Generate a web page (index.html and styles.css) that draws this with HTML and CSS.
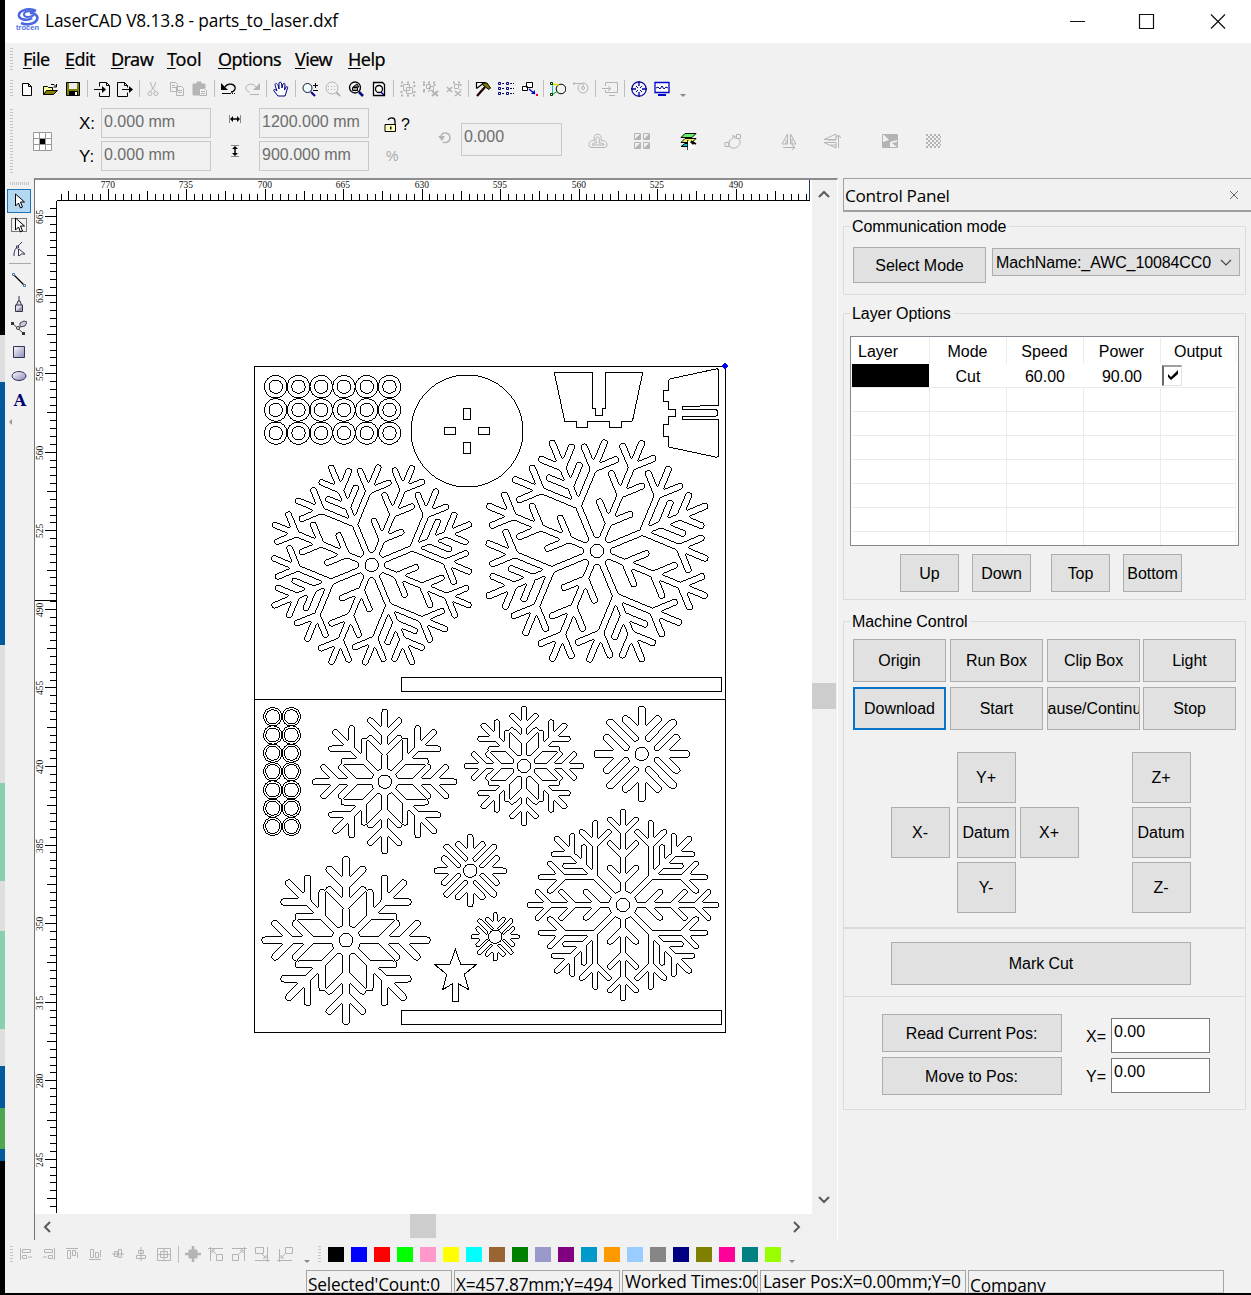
FILE: index.html
```html
<!DOCTYPE html>
<html lang="en">
<head>
<meta charset="utf-8">
<title>LaserCAD V8.13.8 - parts_to_laser.dxf</title>
<link rel="stylesheet" href="styles.css">
</head>
<body>
<div class="desktop"><i class="d1"></i><i class="d2"></i><i class="d3"></i><i class="d2 h138"></i><i class="d4"></i><i class="d2 h50"></i><i class="d4"></i><i class="d2 h37"></i><i class="d3 h42"></i><i class="d5"></i><i class="d3 h12"></i></div>
<div class="window">
  <header class="titlebar">
    <svg class="logo" width="24" height="24" viewBox="0 0 24 24"><g fill="none" stroke="#4a66e0"><path d="M20 3C12-1 2 3 3 8c1 4 9 5 13 2" stroke-width="2.6"/><path d="M18 4C12 2 7 4 8 7s8 2 10 0" stroke-width="2"/><path d="M14 5c7 0 9 5 6 8-3 4-11 4-15 2" stroke-width="2.6"/></g><text x="0" y="22" textLength="23" lengthAdjust="spacingAndGlyphs" class="logotext">trocen</text></svg>
    <span class="title">LaserCAD V8.13.8 - parts_to_laser.dxf</span>
    <svg class="winbtns" width="160" height="20" viewBox="0 0 160 20" fill="none" stroke="#111" stroke-width="1.2"><path d="M0 10.5h15M69.500 3.500h14v14h-14zM141 3.500l14 14M155 3.500l-14 14"/></svg>
  </header>
  <nav class="menubar"><i class="grip"></i><span class="w44"><u>F</u>ile</span><span class="w46"><u>E</u>dit</span><span class="w56"><u>D</u>raw</span><span class="w51"><u>T</u>ool</span><span class="w77"><u>O</u>ptions</span><span class="w53"><u>V</u>iew</span><span><u>H</u>elp</span></nav>
  <div class="toolbar"><i class="grip"></i>
    <svg viewBox="0 0 16 16"><path d="M3.500 2.500h6l3 3v9h-9zM9.500 2.500v3h3" fill="#fff" stroke="#000"/></svg>
    <svg viewBox="0 0 16 16"><path d="M1.500 13.500v-8h4l1 1h4v3" fill="#ff9" stroke="#000"/><path d="M1.500 13.500l3-4h11l-4 4z" fill="#808000" stroke="#000"/><path d="M9 3.500h3l2 2M14.500 3v3h-3" fill="none" stroke="#000"/></svg>
    <svg viewBox="0 0 16 16"><path d="M1.500 1.500h13v13h-13z" fill="#808000" stroke="#000"/><path d="M4 2h8v6H4z" fill="#eee"/><path d="M4 10h9v5H4z" fill="#000"/><path d="M10 11h2v3h-2z" fill="#fff"/></svg>
    <i class="sep"></i>
    <svg viewBox="0 0 16 16"><path d="M5.500 5.500v-4h7l3 3v11h-10v-4M12.500 1.500v3h3" fill="none" stroke="#000"/><path d="M0 8.500h10" stroke="#000"/><path d="M8 5l4 3.500L8 12z"/></svg>
    <svg viewBox="0 0 16 16"><path d="M10.500 6.500v-2l-3-3h-7v14h10v-4M7.500 1.500v3h3" fill="none" stroke="#000"/><path d="M5 8.500h9" stroke="#000"/><path d="M12 5l4 3.500-4 3.500z"/></svg>
    <i class="sep"></i>
    <svg class="off" viewBox="0 0 16 16"><path d="M4.500 1c0 4 3 7 4.500 9M9.500 1c0 4-3 7-5 9"/><circle cx="4" cy="12.500" r="2"/><circle cx="10" cy="12.500" r="2"/></svg>
    <svg class="off" viewBox="0 0 16 16"><path d="M1.500 1.500h5l2 2v7h-7zM3 4.500h3M3 6.500h4M7.500 5.500h5l2 2v7h-7zM9 9.500h4M9 11.500h4"/></svg>
    <svg class="off" viewBox="0 0 16 16"><path d="M1 3h12v4H7v7H1zM5 1h4v2H5z" fill="#b4b4b4"/><path d="M7.500 7.500h5l2 2v5h-7zM9 10.500h4M9 12.500h4"/></svg>
    <i class="sep"></i>
    <svg viewBox="0 0 16 16"><path d="M4 6c3-5 11-3 10 2-1 3-3 3-4 3" fill="none" stroke="#000" stroke-width="1.300"/><path d="M0 2v7h7z"/><path d="M1 12.500h9M11 12.500h1M13 12.500h1" stroke="#000"/></svg>
    <svg class="off" viewBox="0 0 16 16"><path d="M12 6c-3-5-11-3-10 2 1 3 3 3 4 3M6 13.500h9"/><path d="M16 2v7H9z" fill="#b4b4b4" stroke="none"/></svg>
    <i class="sep"></i>
    <svg viewBox="0 0 16 16"><path d="M5 15L1 10c-1-2 1-2 3 0L2 4c0-2 2-2 3 0l1 4V2c0-1 2-1 2.500 0l.5 5 1-4c1-1 2-1 2 1l-.5 5 1.500-3c1-1 2 0 1.500 1L12 15z" fill="#fff" stroke="#000080"/></svg>
    <i class="sep"></i>
    <svg viewBox="0 0 16 16"><circle cx="5.500" cy="7" r="4.500" fill="#eff" stroke="#113"/><path d="M9 11l4 4" stroke="#008" stroke-width="2"/><path d="M11 4.500h5M13.500 2v5M11 9.500h5" stroke="#000"/></svg>
    <svg class="off" viewBox="0 0 16 16"><circle cx="7" cy="7" r="6"/><path d="M11 11l4 4" stroke-width="2"/><path d="M3 5.500h8M3 8.500h8" stroke-dasharray="1 2"/></svg>
    <svg viewBox="0 0 16 16"><circle cx="7" cy="6.500" r="5.500" fill="#eee" stroke="#000" stroke-width="1.300"/><path d="M4.500 6.500h5v3h-5zM5 6l4-3 2 3z" fill="#999" stroke="#000"/><path d="M11 11l4 4" stroke="#008" stroke-width="2.500"/></svg>
    <svg viewBox="0 0 16 16"><path d="M2.500 1.500h9l2 2v11h-11z" fill="#fff" stroke="#000" stroke-width="1.300"/><circle cx="8" cy="8" r="3.500" fill="none" stroke="#000" stroke-width="1.300"/><path d="M10 11l3 3" stroke="#008" stroke-width="1.500"/></svg>
    <i class="sep"></i>
    <svg class="off" viewBox="0 0 16 16"><path d="M3.500 3.500h6v6h-6zM6.500 6.500h6v6h-6z"/><path d="M1 1.500h15M1 14.500h15M1.500 4v10M14.500 4v10" stroke-width="2" stroke-dasharray="2 4"/></svg>
    <svg class="off" viewBox="0 0 16 16"><path d="M3.500 3.500h4v4h-4zM6.500 5.500h4v4h-4z"/><path d="M0 1.500h12M0 10.500h6M1 3v8M11.500 3v4" stroke-width="2" stroke-dasharray="2 3"/><path d="M9 10l6 5M15 10l-6 5" stroke-width="2"/></svg>
    <svg class="off" viewBox="0 0 16 16"><path d="M8.500 3.500h4v4h-4z"/><path d="M7 1.500h8M14.500 3v6" stroke-width="2" stroke-dasharray="2 3"/><path d="M1 6l5 5M6 6l-5 5M9 10l6 5M15 10l-6 5" stroke-width="1.600"/></svg>
    <i class="sep"></i>
    <svg viewBox="0 0 16 16"><path d="M1.500 7.500v-6h8l-8 6" fill="#fff" stroke="#000" stroke-width="1.200"/><path d="M7 2h5l3.500 5-1.500 1.500L9 5z" fill="#770" stroke="#000"/><path d="M10 6l-8 9" stroke="#200" stroke-width="2.300"/></svg>
    <svg viewBox="0 0 16 16" fill="none" stroke="#113"><path d="M.500 1.500h2v2h-2zM.500 6.500h2v2h-2zM.500 11.500h2v2h-2zM8.500 1.500h2v2h-2zM8.500 6.500h2v2h-2zM8.500 11.500h2v2h-2z" stroke="#008"/><path d="M4 2.500h3M4 7.500h3M4 12.500h3M12 2.500h4M12 7.500h4M12 12.500h4" stroke-dasharray="2 1"/></svg>
    <svg viewBox="0 0 16 16"><path d="M4.500 1.500h6v5h-6zM.500 5.500h5v4h-5z" fill="#fff" stroke="#000"/><path d="M7 8l6 5" stroke="#00c" stroke-width="1.300"/><path d="M13 9v4H9z" fill="#00c"/><path d="M14 13h2v2h-2z" fill="#e02"/></svg>
    <i class="sep"></i>
    <svg viewBox="0 0 16 16" fill="none"><circle cx="11" cy="8" r="4.800" stroke="#000"/><path d="M2 3l7 1" stroke="#dd0" stroke-width="1.500"/><path d="M2.500 3v10" stroke="#0cc"/><path d="M3 13l5-3" stroke="#0a0"/><path d="M.500 1.500h2v2h-2zM.500 12.500h2v2h-2z" stroke="#030"/></svg>
    <svg class="off" viewBox="0 0 16 16"><circle cx="10" cy="7" r="5"/><circle cx="10" cy="7" r="1.500"/><path d="M0 2.500h9M10 2v4M1 1v3"/></svg>
    <i class="sep"></i>
    <svg class="off" viewBox="0 0 16 16"><path d="M3.500 5v-3.500h12v10h-12V9M7 14.500h6M0 7.500h8M6 5l3 2.500L6 10"/></svg>
    <i class="sep"></i>
    <svg viewBox="0 0 16 16" fill="none" stroke="#009"><circle cx="8" cy="8" r="7.200" stroke-width="1.200"/><path d="M8 0v5M8 11v5M0 8h5M11 8h5" stroke-width="1.300"/><path d="M5 5l2 2M11 5L9 7M5 11l2-2M11 11L9 9"/></svg>
    <svg viewBox="0 0 16 16"><path d="M1 1.500h14v10H1z" fill="#fff" stroke="#00c" stroke-width="1.300"/><path d="M2 7l2-1 2 2 2-3 2 3 2-2 2 1" fill="none" stroke="#008"/><path d="M4 13h8v2H4z" fill="#00c"/></svg>
    <i class="more"></i>
  </div>
  <div class="propbar">
    <i class="grip"></i>
    <svg class="anchor" width="19" height="19" viewBox="0 0 19 19"><path d="M.500.500h18v18H.500zM6.500.500v18M12.500.500v18M.500 6.500h18M.500 12.500h18" fill="#fff" stroke="#999"/><path d="M7 7h5v5H7z"/></svg>
    <div class="lbls"><span>X:</span><span>Y:</span></div>
    <div class="fields"><span class="field">0.000 mm</span><span class="field">0.000 mm</span></div>
    <div class="arrows"><svg width="14" height="12" viewBox="0 0 14 12"><path d="M1.500 2v8M12.500 2v8" stroke="#888"/><path d="M3 6h8" stroke="#000" stroke-width="1.500"/><path d="M2 6l3-3v6zM12 6L9 3v6z"/></svg><svg width="12" height="14" viewBox="0 0 12 14"><path d="M2 1.500h8M2 12.500h8" stroke="#888"/><path d="M6 3v8" stroke="#000" stroke-width="1.500"/><path d="M6 2l3 3H3zM6 12l3-3H3z"/></svg></div>
    <div class="fields"><span class="field">1200.000 mm</span><span class="field">900.000 mm</span></div>
    <div class="locks"><span class="lockrow"><svg width="13" height="16" viewBox="0 0 13 16"><path d="M4 3c1-3 7-3 7 1v4" fill="none" stroke="#000" stroke-width="1.300"/><path d="M1 7.500h10.500v7H1z" fill="#ffb" stroke="#000"/><path d="M6 9.500h1.500v3H6z"/></svg>?</span><span class="pct">%</span></div>
    <svg class="off rot" width="14" height="16" viewBox="0 0 14 16"><path d="M3 7c0-6 9-5 9 1 0 5-6 5-7 4" stroke-width="1.500"/><path d="M0 6h7l-3 5z" fill="#b4b4b4" stroke="none"/></svg>
    <span class="field angle">0.000</span>
    <svg class="off p1" width="20" height="16" viewBox="0 0 20 16"><path d="M1 11.500c0-3.500 3-4 5.500-4C4-1 15-1 13 7.500c3 0 6 .5 6 4 0 2.500-1.500 3-3 3H4c-1.500 0-3-.5-3-3z"/><path d="M4 12c0-2 2-2 4.500-2C6 1.500 13 1.500 11 10c3 0 5 0 5 2z"/></svg>
    <svg class="off p2" width="18" height="18" viewBox="0 0 18 18"><path d="M1.500 1.500h6v6h-6zM10.500 1.500h6v6h-6zM1.500 10.500h6v6h-6zM10.500 10.500h6v6h-6z"/><path d="M7 2v5H2zM16 2v5h-5zM7 11v5H2zM16 11v5h-5z" fill="#b4b4b4" stroke="none"/></svg>
    <svg class="p3" width="18" height="18" viewBox="0 0 18 18"><path d="M6 1.500h11l-4 4H2z" fill="#6e6" stroke="#000"/><path d="M6 6.500h11l-4 4H2z" fill="#ee6" stroke="#000"/><path d="M6 11.500h9l-4 3H2z" fill="#0cc" stroke="#000"/><path d="M9 8v10M12 9l5 3" stroke="#000" stroke-width="1.500"/><path d="M9 8l8 8h-5l-3 3z" fill="#fff"/></svg>
    <svg class="off p4" width="18" height="18" viewBox="0 0 18 18"><path d="M6 8c-4 7 3 10 7 7 5-3 3-8 1-8M2 10.500h3v4H1v-4zM12.500 2.500h4v4h-4zM5 9l6-5M8 4h3v3"/></svg>
    <svg class="off p5" width="16" height="18" viewBox="0 0 16 18"><path d="M6.500 2v10H1zM9.500 2v10H15zM2 15.500h12M11 13l3 2.500L11 18M11 7v5M5 8v4"/></svg>
    <svg class="off p6" width="18" height="18" viewBox="0 0 18 18"><path d="M1 7.500h12V2zM1 10.500h12V16zM15.500 3v13M13 6l2.500-3L18 6M5 8h8M8 13h5"/></svg>
    <svg class="off p7" width="16" height="16" viewBox="0 0 16 16"><path d="M.500 1.500h15v13H.500z"/><path d="M8 2h7v5L8 9v5H1V9l6-2L2 2zM10 10l5 4v-5z" fill="#b4b4b4" stroke="none"/></svg>
    <svg class="off p8" width="16" height="16" viewBox="0 0 16 16"><path d="M1 2h14M3 4h14M1 6h14M3 8h14M1 10h14M3 12h14M1 14h14" stroke-width="2" stroke-dasharray="2 2"/></svg>
  </div>
  <main class="main">
    <aside class="tools">
      <i class="hgrip"></i>
      <span class="tool active"><svg viewBox="0 0 16 16"><path d="M4.500 1v12l3-3 2 5 2-1-2-5h4z" fill="#fff" stroke="#000"/></svg></span>
      <span class="tool"><svg viewBox="0 0 16 16"><path d="M.500 1.500h15v13H.500z" fill="none" stroke="#000" stroke-dasharray="1 1"/><path d="M4.500 1v12l3-3 2 5 2-1-2-5h4z" fill="#fff" stroke="#000"/></svg></span>
      <span class="tool"><svg viewBox="0 0 16 16" fill="none" stroke="#335"><path d="M3 15c0-6 1-7 8-14M7.500 8v7M8 8l6 5H10.500L8 15"/><path d="M5.500 5h2v2h-2z" fill="#fff"/></svg></span>
      <i class="hsep"></i>
      <span class="tool"><svg viewBox="0 0 16 16"><path d="M3 3l10 10" stroke="#000" stroke-width="1.200"/><path d="M1.500 1.500h2v2h-2zM12.500 12.500h2v2h-2z" fill="#fff" stroke="#47a"/></svg></span>
      <span class="tool"><svg viewBox="0 0 16 16"><path d="M4.500 15.500V9h7v6.500zM5.500 9L7 5h2l1.500 4M8 0v5" fill="#dde" stroke="#334"/><path d="M5 15l6-5v5z" fill="#99b"/></svg></span>
      <span class="tool"><svg viewBox="0 0 16 16"><path d="M1 3l12 11" stroke="#444"/><path d="M0 2h3v3H0zM11 12h3v3h-3z" fill="#333"/><path d="M9 3l4-2 3 1-2 4-5 1z" fill="#ccd" stroke="#445"/><circle cx="7" cy="8" r="1.500" fill="#fff" stroke="#333"/></svg></span>
      <span class="tool"><svg viewBox="0 0 16 16"><defs><linearGradient id="g" x2="1" y2="1"><stop stop-color="#fff"/><stop offset="1" stop-color="#8888b8"/></linearGradient></defs><path d="M2.500 2.500h11v11h-11z" fill="url(#g)" stroke="#335"/></svg></span>
      <span class="tool"><svg viewBox="0 0 16 16"><ellipse cx="8" cy="8" rx="7" ry="4.500" fill="url(#g)" stroke="#335"/></svg></span>
      <span class="tool letter">A</span>
      <i class="lefttri"></i>
    </aside>
    <section class="view">
      <svg id="canvas" width="777" height="1034" viewBox="35 180 777 1034"></svg>
      <div class="vscroll"><svg width="12" height="8" viewBox="0 0 12 8"><path d="M1 7l5-5 5 5" /></svg><b></b><svg width="12" height="8" viewBox="0 0 12 8"><path d="M1 1l5 5 5-5"/></svg></div>
      <div class="hscroll"><svg width="8" height="12" viewBox="0 0 8 12"><path d="M7 1L2 6l5 5"/></svg><b></b><svg width="8" height="12" viewBox="0 0 8 12"><path d="M1 1l5 5-5 5"/></svg></div>
    </section>
    <section class="panel">
      <div class="phead"><span>Control Panel</span><svg width="8" height="8" viewBox="0 0 8 8"><path d="M0 0l8 8M8 0L0 8" stroke="#666"/></svg></div>
      <fieldset class="comm"><legend>Communication mode</legend>
        <div class="row"><span class="btn sel">Select Mode</span><span class="combo">MachName:_AWC_10084CC0<svg width="12" height="8" viewBox="0 0 12 8"><path d="M1 1l5 5 5-5" fill="none" stroke="#444" stroke-width="1.200"/></svg></span></div>
      </fieldset>
      <fieldset class="layers"><legend>Layer Options</legend>
        <div class="table">
          <div class="tr th"><span>Layer</span><span>Mode</span><span>Speed</span><span>Power</span><span>Output</span></div>
          <div class="tr r1"><span class="black"></span><span>Cut</span><span>60.00</span><span>90.00</span><span><i class="check"><svg width="12" height="12" viewBox="0 0 12 12"><path d="M1 5l3 3 7-7v4l-7 6-3-3z"/></svg></i></span></div>
          <div class="tr"><span></span><span></span><span></span><span></span><span></span></div>
          <div class="tr"><span></span><span></span><span></span><span></span><span></span></div>
          <div class="tr"><span></span><span></span><span></span><span></span><span></span></div>
          <div class="tr"><span></span><span></span><span></span><span></span><span></span></div>
          <div class="tr"><span></span><span></span><span></span><span></span><span></span></div>
          <div class="tr"><span></span><span></span><span></span><span></span><span></span></div>
          <div class="tr last"><span></span><span></span><span></span><span></span><span></span></div>
        </div>
        <div class="order"><span class="btn">Up</span><span class="btn">Down</span><span class="btn">Top</span><span class="btn">Bottom</span></div>
      </fieldset>
      <fieldset class="machine"><legend>Machine Control</legend>
        <div class="cmds"><span class="btn">Origin</span><span class="btn">Run Box</span><span class="btn">Clip Box</span><span class="btn light">Light</span><span class="btn focus">Download</span><span class="btn">Start</span><span class="btn"><em>Pause/Continue</em></span><span class="btn light">Stop</span></div>
        <div class="jog"><span class="btn yp">Y+</span><span class="btn zp">Z+</span><span class="btn xm">X-</span><span class="btn dd">Datum</span><span class="btn xp">X+</span><span class="btn zd">Datum</span><span class="btn ym">Y-</span><span class="btn zm">Z-</span></div>
      </fieldset>
      <div class="mark"><span class="btn">Mark Cut</span></div>
      <div class="pos">
        <div class="pbtns"><span class="btn">Read Current Pos:</span><span class="btn">Move to Pos:</span></div>
        <div class="pin"><label>X=</label><span>0.00</span><label>Y=</label><span>0.00</span></div>
      </div>
    </section>
  </main>
  <div class="bottombar"><i class="grip"></i>
    <svg class="off" viewBox="0 0 16 16"><path d="M2.500 2v12M4.500 3.500h8v3h-8zM4.500 9.500h4v3h-4zM10 11h4"/></svg>
    <svg class="off" viewBox="0 0 16 16"><path d="M13.500 2v12M3.500 3.500h8v3h-8zM7.500 9.500h4v3h-4zM2 11h4"/></svg>
    <svg class="off" viewBox="0 0 16 16"><path d="M2 2.500h12M3.500 4.500h3v8h-3zM8.500 4.500h3v5h-3zM13.500 6v6"/></svg>
    <svg class="off" viewBox="0 0 16 16"><path d="M2 13.500h12M3.500 3.500h3v8h-3zM8.500 6.500h3v5h-3zM13.500 4v7"/></svg>
    <svg class="off" viewBox="0 0 16 16"><path d="M2 8h12M4.500 5.500h3v5h-3zM8.500 3.500h3v8h-3z"/></svg>
    <svg class="off" viewBox="0 0 16 16"><path d="M8 1v14M5.500 4.500h5v3h-5zM3.500 9.500h9v3h-9z"/></svg>
    <svg class="off" viewBox="0 0 16 16"><path d="M1.500 2.500h13v12h-13zM4.500 5.500h7v6h-7zM8 2v12M2 8.500h12"/></svg>
    <i class="sep"></i>
    <svg class="off" viewBox="0 0 16 16"><path d="M4 4h8v8H4z" fill="#b4b4b4"/><path d="M8 0v16M0 8h16" stroke-width="2.500"/></svg>
    <svg class="off" viewBox="0 0 16 16"><path d="M0 2.500h15M2.500 1v14M8.500 8.500h6v6h-6zM4 4l4 4M4 7V4h3"/></svg>
    <svg class="off" viewBox="0 0 16 16"><path d="M1 2.500h15M13.500 1v14M1.500 8.500h6v6h-6zM12 4L8 8M9 4h3v3"/></svg>
    <svg class="off" viewBox="0 0 16 16"><path d="M1 14.500h15M13.500 1v15M1.500 1.500h8v6h-8zM8 8l4 4M12 9v3H9"/></svg>
    <svg class="off" viewBox="0 0 16 16"><path d="M0 14.500h15M2.500 3v13M8.500 1.500h7v6h-7zM8 8l-4 4M4 9v3h3"/></svg>
    <i class="more"></i><i class="grip g2"></i><div class="swatches" id="swatches"></div><i class="more m2"></i>
  </div>
  <footer class="status"><span class="s1">Selected'Count:0</span><span class="s2">X=457.87mm;Y=494</span><span class="s3">Worked Times:00</span><span class="s4">Laser Pos:X=0.00mm;Y=0</span><span class="s5">Company</span></footer>
</div>
<script src="app.js"></script>
</body>
</html>
```
FILE: styles.css
```css
* { box-sizing: border-box; }
body { margin: 0; width: 1251px; height: 1295px; overflow: hidden; display: flex; background: #000; font: 16px "Liberation Sans", Arial, sans-serif; color: #000; }
i { font-style: normal; display: block; flex: none; }
svg { flex: none; display: block; }
.desktop { width: 5px; flex: none; }
.d1 { height: 335px; background: #000; }
.d2 { height: 47px; background: #dedede; }
.d3 { height: 263px; background: #005a9c; }
.d4 { height: 98px; background: #88d0ae; }
.d5 { height: 41px; background: #4fa653; }
.h138 { height: 138px; } .h50 { height: 50px; } .h37 { height: 37px; } .h42 { height: 42px; } .h12 { height: 12px; }
.window { width: 1246px; height: 1293px; background: #f1f1f1; display: flex; flex-direction: column; }
.titlebar { height: 43px; background: #fff; display: flex; align-items: center; padding: 0 0 2px 11px; flex: none; }
.logo { margin-top: -1px; }
.logotext { font: bold 8px "Liberation Sans", sans-serif; fill: #5070e0; }
.title { margin-left: 5px; font: 17.3px "Open Sans", sans-serif; letter-spacing: -.14px; width: 1020px; white-space: nowrap; }
.winbtns { margin-left: 5px; }
.menubar { height: 31px; flex: none; display: flex; align-items: center; font: 18px "Noto Sans", sans-serif; letter-spacing: -.55px; -webkit-text-stroke: .2px #000; }
.menubar u { text-underline-offset: 2px; text-decoration-thickness: 1px; }
.grip { width: 3px; height: 22px; margin: 0 10px 0 5px; background: repeating-linear-gradient(#c4c4c4 0 1px, transparent 1px 3px); }
.w44 { width: 42px; } .w46 { width: 46px; } .w56 { width: 56px; } .w51 { width: 51px; letter-spacing: -.2px; } .w77 { width: 77px; } .w53 { width: 53px; }
.toolbar { height: 29px; flex: none; display: flex; align-items: center; }
.toolbar .grip { height: 18px; margin: 0 2px 0 5px; }
.toolbar svg { width: 16px; height: 16px; margin: 0 3.6px; }
.off { fill: none; stroke: #b4b4b4; }
.sep { width: 1px; height: 17px; background: #bdbdbd; margin: 0 2.3px; }
.more { border: 3px solid transparent; border-top-color: #888; border-bottom: 0; margin: 14px 0 0 6px; }
.propbar { height: 75px; flex: none; display: flex; align-items: center; }
.propbar .grip { height: 64px; }
.anchor { margin: 2px 0 0 10px; }
.lbls { width: 49px; display: flex; flex-direction: column; gap: 12px; padding-left: 27px; font-size: 17px; line-height: 21px; margin-top: -2px; }
.fields { width: 110px; display: flex; flex-direction: column; gap: 3px; margin-top: -3px; }
.field { height: 30px; border: 1.500px solid #c9c9c9; padding: 3px 2px; line-height: 20px; color: #6d6d6d; white-space: nowrap; background: #f0f0f0; font-size: 16px; }
.arrows { width: 48px; display: flex; flex-direction: column; align-items: center; gap: 19px; margin-top: -11px; }
.locks { width: 53px; padding-left: 15px; display: flex; flex-direction: column; gap: 13px; margin-top: -1px; }
.lockrow { display: flex; gap: 4px; align-items: center; line-height: 18px; }
.pct { font-size: 14px; color: #aaa; line-height: 18px; padding-left: 2px; }
.rot { margin: -6px 9px 0 16px; }
.angle { width: 101px; height: 33px; margin-top: -3px; }
.p1 { margin-left: 26px; } .p2 { margin-left: 25px; } .p3 { margin-left: 28px; } .p4 { margin-left: 27px; } .p5 { margin-left: 39px; } .p6 { margin-left: 26px; } .p7 { margin-left: 41px; } .p8 { margin-left: 27px; }
.main { height: 1062px; flex: none; display: flex; }
.tools { width: 29px; flex: none; padding: 3px 0 0 2px; display: flex; flex-direction: column; }
.hgrip { width: 19px; height: 3px; margin: 1px 0 4px 3px; background: repeating-linear-gradient(90deg, #c4c4c4 0 1px, transparent 1px 2px); }
.tool { width: 24px; height: 24px; flex: none; display: flex; align-items: center; justify-content: center; }
.tool svg { width: 16px; height: 16px; }
.active { background: #b4d7f2; border: 1px solid #1c73bd; }
.hsep { height: 1px; margin: 2px 3px 4px 2px; background: #aaa; }
.letter { font: bold 16px "DejaVu Serif", serif; color: #000070; padding-left: 2px; }
.lefttri { width: 0; border: 3px solid transparent; border-right-color: #999; border-left: 0; margin: 7px 0 0 2px; }
.view { width: 804px; flex: none; border-left: 1px solid #747474; border-top: 2px solid #8d8d8d; display: grid; grid-template: 1034px 26px / 777px 25px; border-right: 1px solid #fff; background: #f0f0f0; border-bottom: 0; }
#canvas { background: #fff; }
.vscroll, .hscroll { display: flex; align-items: center; background: #f0f0f0; fill: none; stroke: #5a5a5a; stroke-width: 2; }
.vscroll { flex-direction: column; padding: 10px 1px 0 0; }
.vscroll b { width: 24px; height: 26px; background: #cdcdcd; margin: 485px 0 487px; flex: none; }
.hscroll { padding: 0 0 0 8px; margin: 0; }
.hscroll b { width: 26px; height: 24px; background: #cdcdcd; margin: -2px 357px 0 359px; flex: none; }
.panel { flex: 1; padding-left: 5px; }
.phead { height: 34px; border: 1px solid #a0a0a0; border-right: 0; border-width: 1px 0 2px 1px; display: flex; align-items: center; justify-content: space-between; padding: 1px 13px 0 1px; font: 17.200px "Open Sans", sans-serif; letter-spacing: -.3px; }
fieldset { margin: 0; padding: 0; border: 1px solid #dcdcdc; width: 403px; min-width: 0; }
legend { margin-left: 6px; padding: 0 3px 0 2px; height: 19px; line-height: 19px; letter-spacing: -.07px; }
.comm { height: 78px; margin-top: 5px; }
.row { display: flex; padding: 11px 0 0 9px; gap: 6px; }
.btn { background: #e1e1e1; border: 1px solid #adadad; display: flex; align-items: center; justify-content: center; overflow: hidden; white-space: nowrap; letter-spacing: -.05px; }
.btn em { font-style: normal; flex: none; }
.sel { width: 133px; height: 36px; padding-top: 2px; }
.combo { width: 248px; height: 28px; margin-top: 1px; border: 1px solid #adadad; background: #e1e1e1; display: flex; align-items: center; justify-content: space-between; padding: 1px 7px 0 3px; letter-spacing: -.1px; }
.layers { height: 296px; margin-top: 9px; }
.table { margin: 13px 0 0 6px; width: 389px; height: 210px; background: #fff; border: 1px solid #828790; padding: 1px 2px 1px 1px; overflow: hidden; }
.tr { display: grid; grid-template-columns: 78px 77px 77px 77px 1fr; height: 24px; border-bottom: 1px solid #ebebeb; }
.tr span { border-right: 1px solid #ebebeb; display: flex; align-items: center; justify-content: center; }
.tr span:last-child { border-right-color: #f4f4f4; }
.th { height: 26px; border: 0; }
.th span { padding: 2px 1px 0 0; }
.th span:first-child { justify-content: flex-start; padding-left: 6px; }
.th span:last-child { padding-right: 0; }
.r1 { height: 24px; }
.r1 span { border-color: #fff; padding-top: 2px; }
.r1 span:last-child { justify-content: flex-start; border: 0; padding: 0; }
.r1 .black { background: #000; border-right: 1px solid #fff; }
.check { width: 20px; height: 21px; border: 1px solid #e3e3e3; border-top: 2px solid #a0a0a0; border-left: 2px solid #696969; background: #fff; padding: 2px 0 0 3px; margin-left: 1px; }
.order { display: flex; padding: 8px 0 0 56px; }
.order .btn { width: 59px; height: 38px; margin-right: 13px; padding-top: 1px; }
.order .btn:nth-child(2) { margin-right: 20px; }
.machine { height: 316px; margin-top: 12px; }
.cmds { display: grid; grid-template-columns: 93px 93px 93px 93px; gap: 5px 4px; padding: 8px 0 0 9px; grid-auto-rows: 43px; }
.cmds .light { margin: 0 1px 0 -1px; }
.focus { border: 2px solid #0a74c9; }
.jog { display: grid; padding: 22px 0 0 47px; gap: 4px 0; grid-template-rows: 51px 51px 51px; grid-template-columns: 59px 7px 59px 4px 59px 53px 59px; }
.jog .btn { padding-right: 1px; }
.yp, .dd, .ym { grid-column: 3; } .xm { grid-column: 1; } .xp { grid-column: 5; } .zp, .zd, .zm { grid-column: 7; }
.mark { width: 403px; height: 69px; border: 1px solid #dcdcdc; padding: 13px 0 0 47px; }
.mark .btn { width: 300px; height: 43px; }
.pos { width: 403px; height: 113px; border: 1px solid #dcdcdc; border-top: 0; display: flex; padding: 17px 0 0 38px; }
.pbtns { width: 204px; display: flex; flex-direction: column; gap: 5px; }
.pbtns .btn { width: 180px; height: 38px; padding: 2px 1px 0 0; }
.pin { display: grid; grid-template-columns: 25px 99px; grid-auto-rows: 35px; gap: 5px 0; padding-top: 4px; }
.pin label { line-height: 37px; }
.pin span { background: #fff; border: 1px solid #7a7a7a; padding: 4px 2px; line-height: 18px; }
.bottombar { height: 29px; flex: none; display: flex; align-items: center; }
.bottombar .grip { height: 18px; margin: 0 5px 0 5px; }
.bottombar svg { width: 16px; height: 16px; margin: 0 3.5px; position: relative; top: -.5px; }
.bottombar svg:first-of-type { margin-left: 0; }
.bottombar .more { margin-left: 8px; margin-right: 8px; }
.bottombar .g2 { margin: 0 7px 0 0; }
.swatches { display: flex; gap: 7px; }
.swatches b { width: 16px; height: 15px; }
.status { flex: 1; display: flex; padding: 1px 0 0 301px; gap: 2px; font: 17.300px "Open Sans", sans-serif; letter-spacing: -.18px; }
.status span { border: 1px solid #a5a5a5; border-bottom-color: #ccc; height: 23px; overflow: hidden; white-space: nowrap; line-height: 28px; padding-left: 1px; }
.s1 { width: 146px; } .s2 { width: 166px; } .s3 { width: 136px; } .s4 { width: 206px; } .s5 { width: 256px; }
.status .s3, .status .s4 { line-height: 22px; padding-left: 2px; }
.status .s5 { line-height: 29px; }
.ticktext { font: 9.500px "Liberation Serif", serif; text-anchor: middle; fill: #111; }
```
FILE: app.js
```js
const canvas = document.getElementById('canvas');
let out = '';
const path = (d, extra) => { out += `<path d="${d}" fill="none" stroke="#000" shape-rendering="crispEdges" ${extra || ''}/>`; };

// One-pixel contour of a shape: fill it on a scratch bitmap, keep the pixels that touch the outside.
const W = 777, H = 1034, OX = 35, OY = 180;
const scratch = document.createElement('canvas');
scratch.width = W; scratch.height = H;
const g = scratch.getContext('2d', { willReadFrequently: true });
function contour(draw, x0, y0, x1, y1) {
  g.setTransform(1, 0, 0, 1, 0, 0);
  g.clearRect(0, 0, W, H);
  g.translate(-OX, -OY);
  draw();
  const bx = Math.floor(x0 - OX), by = Math.floor(y0 - OY), bw = Math.ceil(x1 - x0) + 2, bh = Math.ceil(y1 - y0) + 2;
  const px = g.getImageData(bx, by, bw, bh).data;
  const on = (x, y) => x >= 0 && y >= 0 && x < bw && y < bh && px[(y * bw + x) * 4 + 3] > 127;
  let d = '';
  for (let y = 0; y < bh; y++) {
    for (let x = 0; x < bw; x++) {
      let n = 0;
      while (on(x + n, y) && !(on(x + n - 1, y) && on(x + n + 1, y) && on(x + n, y - 1) && on(x + n, y + 1))) n++;
      if (n) { d += `M${bx + x + OX} ${by + y + OY}h${n}v1h-${n}z`; x += n; }
    }
  }
  out += `<path d="${d}" shape-rendering="crispEdges"/>`;
}
function circle(x, y, r) {
  contour(() => { g.beginPath(); g.arc(x, y, r + .5, 0, 7); g.fill(); }, x - r - 3, y - r - 3, x + r + 3, y + r + 3);
}

// rulers
let t = 'M56.5 200.5H810M56.5 200.5V1213M35 600.5H56';
for (let i = -6; i < 90; i++) {
  const x = Math.round(107.6 + i * 7.85) + 0.5;
  if (x > 809) break;
  t += `M${x} ${i % 10 === 0 ? 189 : i % 5 === 0 ? 191 : 194}V200`;
  if (i % 10 === 0) out += `<text class="ticktext" x="${x - .7}" y="187.700">${770 - 3.5 * i}</text>`;
}
for (let i = -1; i < 127; i++) {
  const y = Math.round(216 + i * 7.857) + 0.5;
  t += `M${i % 10 === 0 ? 45 : i % 5 === 0 ? 47 : 50} ${y}H56`;
  if (i % 10 === 0) out += `<text class="ticktext" transform="translate(42.700 ${y + .3}) rotate(-90)">${665 - 3.5 * i}</text>`;
}
path(t);
path('M809.5 180V200', 'style="stroke:#223a66"');

// sheet frames, slots and joint plates
path('M254.500 366.500H725.500V1032.500H254.500zM254.500 699.500H725.500M401.500 677.500H721.500V691.500H401.500zM401.500 1010.500H721.500V1024.500H401.500z');
const poly = (pts, ox, oy) => path('M' + pts.split(' ').map(p => { const [a, b] = p.split(','); return (ox + a / 3).toFixed(1) + ' ' + (oy + b / 3).toFixed(1); }).join('L') + 'z');
poly('223,38 337,38 337,145 347,145 347,166 367,166 367,145 377,145 377,38 488,38 458,180 455,184 425,184 425,202 388,202 388,184 323,184 323,202 289,202 289,184 254,184', 480, 360);
poly('712,26 716,30 716,137 607,139 607,148 707,148 713,153 713,165 707,169 607,169 607,178 716,178 716,288 710,292 566,261 566,228 550,228 550,194 566,194 566,169 587,169 587,148 566,148 566,124 550,124 550,91 566,91 566,60 572,56', 480, 360);
poly('616,763 632,808 680,808 643,838 656,884 626,867 626,919 606,919 606,867 578,884 590,838 553,808 600,808', 250, 695);
circle(467, 431, 56);
path('M463.500 408.500h7v11h-7zM463.500 442.500h7v11h-7zM444.500 427.500h11v7h-11zM478.500 427.500h11v7h-11z');
for (let r = 0; r < 3; r++) for (let c = 0; c < 6; c++) { circle(275.7 + 22.75 * c, 386.7 + 23.2 * r, 11.2); circle(275.7 + 22.75 * c, 386.7 + 23.2 * r, 6.7); }
for (let r = 0; r < 7; r++) for (let c = 0; c < 2; c++) { circle(272.7 + 18.6 * c, 716.7 + 18.3 * r, 9.2); circle(272.7 + 18.6 * c, 716.7 + 18.3 * r, 7); }

// snowflakes: each arm is a set of centre-lines, repeated round the hub
function flake(segs, fold, cx, cy, s, w, hub, rot) {
  contour(() => {
    g.lineWidth = w + 1; g.lineCap = 'round';
    g.beginPath();
    for (let k = 0; k < fold; k++) {
      const a = (rot + k * 360 / fold) * Math.PI / 180, C = Math.cos(a), S = Math.sin(a);
      for (const [x1, y1, x2, y2] of segs) {
        g.moveTo(cx + s * (x1 * C - y1 * S), cy + s * (x1 * S + y1 * C));
        g.lineTo(cx + s * (x2 * C - y2 * S), cy + s * (x2 * S + y2 * C));
      }
    }
    g.stroke();
    g.beginPath(); g.arc(cx, cy, hub + .5, 0, 7); g.fill();
  }, cx - 96 * s - 8, cy - 96 * s - 8, cx + 96 * s + 8, cy + 96 * s + 8);
  circle(cx, cy, 6.7);
}
const vee = (y, b) => [[0, -y, b, -y - b], [0, -y, -b, -y - b]];
const fern = [[0, 0, 0, -93], ...vee(24, 13), ...vee(48.5, 13), ...vee(72.3, 13),
  [0, 0, -66, -66], [-27.7, -27.7, -27.7, -82], [-27.7, -59.5, -41.3, -73], [-27.7, -59.5, -14.2, -73],
  [-27.7, -27.7, -82, -27.7], [-59.5, -27.7, -73, -41.3], [-59.5, -27.7, -73, -14.2],
  [-50.7, -50.7, -50.7, -69], [-50.7, -50.7, -69, -50.7], [-39.3, -39.3, -39.3, -57.7], [-39.3, -39.3, -57.7, -39.3]];
const star8 = [[0, 0, 0, -69.6], ...vee(46.7, 14.3), ...vee(29, 14.4)];
const burst = [[0, 0, 0, -44.2], ...vee(18.7, 16), [0, 0, 31.3, -31.3]];
flake(fern, 4, 371.7, 565, 1.126, 5.6, 13, 22.5);
flake(fern, 4, 597, 551, 1.25, 6.1, 13.5, 22.5);
flake(fern, 4, 623, 905, 1, 5, 14, 0);
flake(star8, 8, 384.7, 781.7, 1, 5.5, 13, 0);
flake(star8, 8, 524, 766, .822, 4.9, 11.5, 0);
flake(star8, 8, 346, 940.3, 1.162, 6.5, 14.5, 0);
flake(burst, 4, 641.7, 754, 1, 7, 14, 0);
flake(burst, 4, 470.3, 870.7, .755, 5.5, 10.5, 0);
flake(burst, 4, 495.3, 936.7, .503, 3.9, 8.2, 0);
out += '<path d="M725 363l3 3-3 3-3-3z" fill="#00e" stroke="#00e"/>';
canvas.innerHTML = out;

const colors = '000000 0000ff ff0000 00ff00 ff99cc ffff00 00ffff 996633 008000 9999cc 800080 0099cc ff9900 99ccff 868686 000080 808000 ff0099 008080 99ff00'.split(' ');
document.getElementById('swatches').innerHTML = colors.map(c => `<b style="background:#${c}"></b>`).join('');
```
